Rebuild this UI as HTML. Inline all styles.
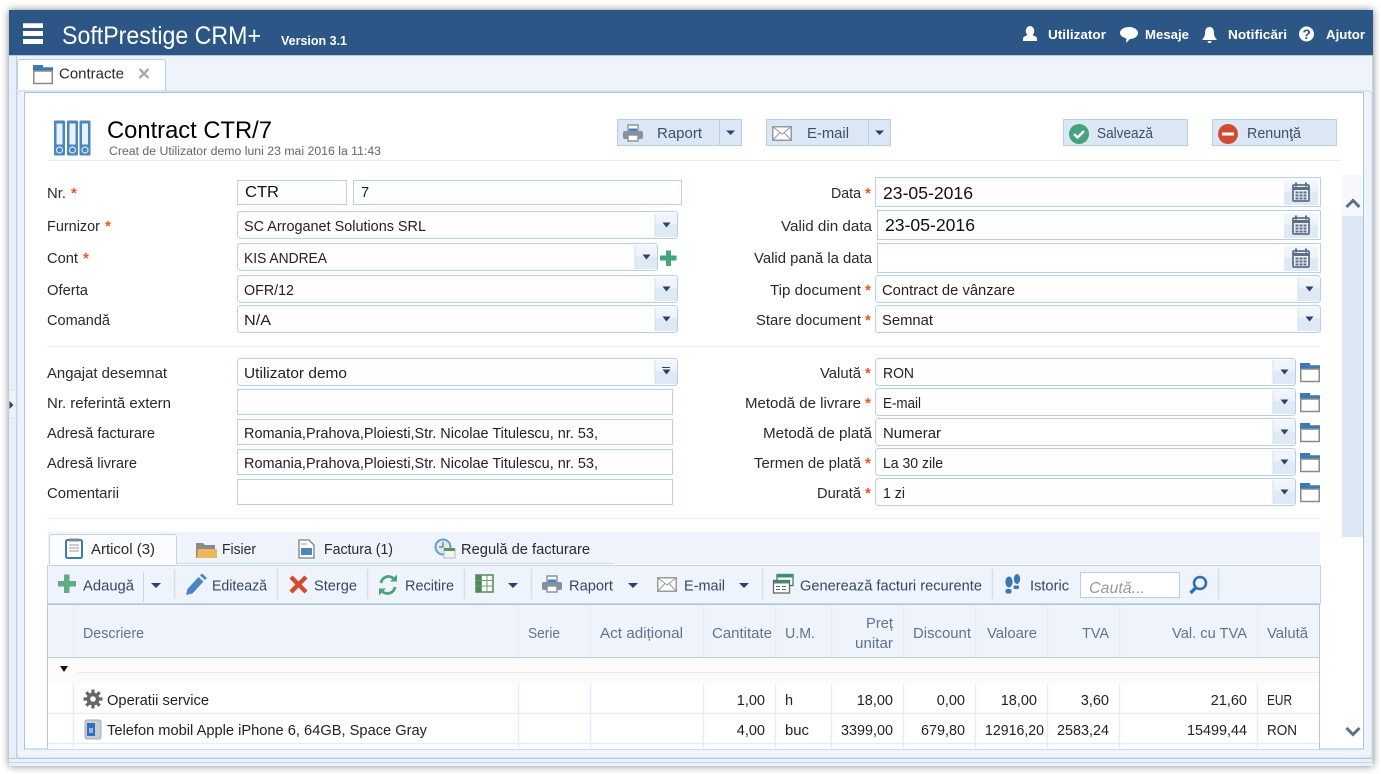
<!DOCTYPE html>
<html lang="ro">
<head>
<meta charset="utf-8">
<title>SoftPrestige CRM+</title>
<style>
html,body{margin:0;padding:0;background:#fff;width:1381px;height:774px;overflow:hidden}
svg{display:block;position:absolute;left:0;top:0}
text{font-family:"Liberation Sans",Arial,sans-serif;font-size:14.5px;fill:#222;white-space:pre}
.h{fill:#fff;font-weight:bold;font-size:13px}
.l{fill:#2a2a2a}
.s{fill:#f4511e;font-size:15px;font-weight:bold}
.b{fill:#3b4f6b}
.tb{fill:#33486a}
.th{fill:#5f7492}
</style>
</head>
<body>
<svg width="1381" height="774" viewBox="0 0 1381 774" xmlns="http://www.w3.org/2000/svg">
<defs>
<linearGradient id="sg" x1="0" y1="0" x2="0" y2="1"><stop offset="0" stop-color="#f3f7fc"/><stop offset=".45" stop-color="#edf2fa"/><stop offset=".5" stop-color="#dfe8f5"/><stop offset="1" stop-color="#dfe8f5"/></linearGradient>
<g id="dd"><rect width="22" height="24" fill="url(#sg)"/><path d="M0 0V24" stroke="#d3dfec"/><path d="M7.500 9.500h8l-4 5z" fill="#26446e"/></g>
<g id="fo"><path d="M0 0h10v2.300h10v4.200H0z" fill="#3f79b5"/><rect x=".75" y="6" width="18.5" height="12.5" fill="#fff" stroke="#8a8a8a" stroke-width="1.5"/></g>
<g id="cal"><rect width="34" height="25" fill="url(#sg)"/><rect x="9" y="5" width="16" height="16" rx="1" fill="#eef2f8" stroke="#5a6f88" stroke-width="1.8"/><path d="M9 7h16v3H9z" fill="#5a6f88"/><path d="M12 2.500v4M22 2.500v4" stroke="#5a6f88" stroke-width="2"/><path d="M11.500 11.500h3v2h-3zM15.500 11.500h3v2h-3zM19.500 11.500h3v2h-3zM11.500 14.500h3v2h-3zM15.500 14.500h3v2h-3zM19.500 14.500h3v2h-3zM11.500 17.500h3v2h-3zM15.500 17.500h3v2h-3zM19.500 17.500h3v2h-3z" fill="#5a6f88"/></g>
<g id="mail"><rect x=".75" y=".75" width="18.500" height="13.500" fill="#fff" stroke="#9a9a9a" stroke-width="1.500"/><path d="M1 1l9 7 9-7M1 14l7-7.500M19 14l-7-7.500" fill="none" stroke="#9a9a9a"/></g>
<g id="pr"><rect x="5" y="0" width="10" height="6" fill="#fff" stroke="#87919b" stroke-width="1.400"/><path d="M6 3.500h8V6H6z" fill="#3f85c9"/><rect x="0" y="6" width="20" height="8" rx="2" fill="#87919b"/><rect x="5" y="10" width="10" height="6" fill="#fff" stroke="#87919b" stroke-width="1.400"/></g>
<g id="tri"><path d="M0 0h10l-5 5z" fill="#26446e"/></g>
<g id="binder"><rect width="11" height="35" rx="1.500" fill="#4a86bf"/><rect x="2.500" y="3" width="6" height="21" fill="#eaf1f8"/><circle cx="5.500" cy="29.500" r="3" fill="#4a86bf" stroke="#dbe8f4" stroke-width="1.200"/></g>
</defs>

<!-- window -->
<rect x="9" y="10" width="1364" height="756" fill="#e9f0f9" style="filter:drop-shadow(0 0 4px rgba(0,0,0,.5))"/>
<rect x="9" y="10" width="1364" height="45" fill="#2b5686"/>
<rect x="9" y="55" width="1364" height="1.500" fill="#b4c9e1"/>
<rect x="17" y="56" width="1355" height="35" fill="#eff3fb"/>
<rect x="9" y="56" width="7" height="704" fill="#e7eff9"/>
<rect x="16" y="56" width="1" height="702" fill="#bed1e6"/>
<rect x="17" y="91" width="1355" height="667" rx="4" fill="#eff3fb" stroke="#c3d4e8"/>
<rect x="24.500" y="92.500" width="1339" height="656.500" fill="#fff" stroke="#a9c3de"/>
<rect x="9" y="758" width="1364" height="1" fill="#b4c9e1"/>
<rect x="9" y="762" width="1364" height="1" fill="#c4d5e8"/>
<rect x="1372" y="56" width="1" height="706" fill="#c3d4e8"/>
<rect x="9" y="390" width="7" height="28" fill="#eef3fa" stroke="#cdd9e8" stroke-width=".5"/>
<path d="M9.500 401l4 4-4 4z" fill="#26446e"/>

<!-- header -->
<path d="M23 23.300h20V28H23zM23 31h20v5H23zM23 39h20v5H23z" fill="#fff"/>
<text x="62" y="44" font-size="25" textLength="199" lengthAdjust="spacingAndGlyphs" style="fill:#fff;font-size:25px">SoftPrestige CRM+</text>
<text x="281" y="45" class="h" textLength="66" lengthAdjust="spacingAndGlyphs">Version 3.1</text>
<ellipse cx="1030" cy="31" rx="4.300" ry="5" fill="#fff"/><path d="M1023 41v-2.500c0-1.800 3-2.800 4.800-3.500 1.400.8 3 .8 4.400 0 1.800.7 4.800 1.700 4.800 3.500V41z" fill="#fff"/>
<text x="1048" y="39" class="h" textLength="58" lengthAdjust="spacingAndGlyphs">Utilizator</text>
<path d="M1129 27c5 0 9 2.500 9 6s-4 6-8 6l-4 4 .5-4.500c-3-1-6.500-2.500-6.500-5.500 0-3.500 4-6 9-6z" fill="#fff"/>
<text x="1145" y="39" class="h" textLength="44" lengthAdjust="spacingAndGlyphs">Mesaje</text>
<path d="M1209.500 27c3.500 0 4.500 3 4.500 6 0 3 1 4.500 2.500 6v1h-14v-1c1.500-1.500 2.500-3 2.500-6 0-3 1-6 4.500-6zM1207.500 41h4a2 2 0 0 1-4 0z" fill="#fff"/>
<text x="1228" y="39" class="h" textLength="59" lengthAdjust="spacingAndGlyphs">Notificări</text>
<circle cx="1306.500" cy="34" r="7.500" fill="#fff"/>
<text x="1302.500" y="38.800" style="fill:#2b5686;font-size:13.500px;font-weight:bold">?</text>
<text x="1326" y="39" class="h" textLength="39" lengthAdjust="spacingAndGlyphs">Ajutor</text>

<!-- main tab -->
<path d="M17.500 90V62a2.500 2.500 0 0 1 2.500-2.500h143a2.500 2.500 0 0 1 2.500 2.500V90" fill="#fff" stroke="#b9cde3"/>
<use href="#fo" x="33" y="65"/>
<text x="59" y="78.500" class="l" textLength="65" lengthAdjust="spacingAndGlyphs">Contracte</text>
<path d="M139.500 69l9 9M148.500 69l-9 9" stroke="#a8a8a8" stroke-width="2.400" fill="none"/>

<!-- title -->
<use href="#binder" x="54" y="120.500"/><use href="#binder" x="67" y="120.500"/><use href="#binder" x="79.500" y="120.500"/>
<text x="107" y="138" textLength="165" lengthAdjust="spacingAndGlyphs" style="font-size:24px;fill:#000">Contract CTR/7</text>
<text x="109" y="155" textLength="272" lengthAdjust="spacingAndGlyphs" style="font-size:11.500px;fill:#666">Creat de Utilizator demo luni 23 mai 2016 la 11:43</text>

<!-- buttons -->
<g fill="#dce7f5" stroke="#bccde1">
<rect x="617.500" y="119.500" width="124" height="26"/>
<rect x="766.500" y="119.500" width="124" height="26"/>
<rect x="1063.500" y="119.500" width="124" height="26"/>
<rect x="1212.500" y="119.500" width="124" height="26"/>
</g>
<path d="M719.500 120v25M868.500 120v25" stroke="#bccde1"/>
<use href="#pr" x="623" y="125"/>
<text x="657" y="138" class="b" textLength="45" lengthAdjust="spacingAndGlyphs">Raport</text>
<use href="#tri" x="726" y="131" transform="translate(72.700 12.600) scale(.9)"/>
<use href="#mail" x="772" y="126"/>
<text x="807" y="138" class="b" textLength="42" lengthAdjust="spacingAndGlyphs">E-mail</text>
<use href="#tri" x="875" y="131" transform="translate(87.600 12.600) scale(.9)"/>
<circle cx="1079" cy="134" r="10" fill="#46a37c"/>
<path d="M1074 134l3.500 3.500 6.500-6.500" fill="none" stroke="#fff" stroke-width="2.400"/>
<text x="1097" y="138" class="b" textLength="56" lengthAdjust="spacingAndGlyphs">Salvează</text>
<circle cx="1228" cy="134" r="10" fill="#d24b30"/>
<rect x="1222" y="132.500" width="12" height="3" fill="#fff"/>
<text x="1247" y="138" class="b" textLength="54" lengthAdjust="spacingAndGlyphs">Renunţă</text>
<rect x="48" y="160" width="1292" height="1" fill="#ececf0"/>

<!-- scrollbar -->
<rect x="1342" y="175" width="21" height="41" fill="#f6f8fc"/>
<rect x="1342" y="216" width="21" height="321" fill="#dce6f4"/>
<path d="M1346.500 207l6.500-6.500 6.500 6.500" fill="none" stroke="#5b6f87" stroke-width="3"/>
<path d="M1346.500 728l6.500 6.500 6.500-6.500" fill="none" stroke="#5b6f87" stroke-width="3"/>

<!-- form left labels -->
<g class="labels">
<text x="47" y="198" class="l" textLength="19" lengthAdjust="spacingAndGlyphs">Nr.</text><text x="71" y="198" class="s">*</text>
<text x="47" y="231" class="l" textLength="53" lengthAdjust="spacingAndGlyphs">Furnizor</text><text x="105" y="231" class="s">*</text>
<text x="47" y="263" class="l" textLength="31" lengthAdjust="spacingAndGlyphs">Cont</text><text x="83" y="263" class="s">*</text>
<text x="47" y="295" class="l" textLength="41" lengthAdjust="spacingAndGlyphs">Oferta</text>
<text x="47" y="325" class="l" textLength="63" lengthAdjust="spacingAndGlyphs">Comandă</text>
<text x="47" y="378" class="l" textLength="120" lengthAdjust="spacingAndGlyphs">Angajat desemnat</text>
<text x="47" y="408" class="l" textLength="124" lengthAdjust="spacingAndGlyphs">Nr. referintă extern</text>
<text x="47" y="438" class="l" textLength="108" lengthAdjust="spacingAndGlyphs">Adresă facturare</text>
<text x="47" y="468" class="l" textLength="90" lengthAdjust="spacingAndGlyphs">Adresă livrare</text>
<text x="47" y="498" class="l" textLength="72" lengthAdjust="spacingAndGlyphs">Comentarii</text>
<!-- right labels -->
<text x="831" y="198" class="l" textLength="30" lengthAdjust="spacingAndGlyphs">Data</text><text x="865" y="198" class="s">*</text>
<text x="781" y="231" class="l" textLength="91" lengthAdjust="spacingAndGlyphs">Valid din data</text>
<text x="754" y="263" class="l" textLength="118" lengthAdjust="spacingAndGlyphs">Valid pană la data</text>
<text x="770" y="295" class="l" textLength="91" lengthAdjust="spacingAndGlyphs">Tip document</text><text x="865" y="295" class="s">*</text>
<text x="756" y="325" class="l" textLength="105" lengthAdjust="spacingAndGlyphs">Stare document</text><text x="865" y="325" class="s">*</text>
<text x="820" y="378" class="l" textLength="41" lengthAdjust="spacingAndGlyphs">Valută</text><text x="865" y="378" class="s">*</text>
<text x="745" y="408" class="l" textLength="116" lengthAdjust="spacingAndGlyphs">Metodă de livrare</text><text x="865" y="408" class="s">*</text>
<text x="763" y="438" class="l" textLength="109" lengthAdjust="spacingAndGlyphs">Metodă de plată</text>
<text x="754" y="468" class="l" textLength="107" lengthAdjust="spacingAndGlyphs">Termen de plată</text><text x="865" y="468" class="s">*</text>
<text x="817" y="498" class="l" textLength="44" lengthAdjust="spacingAndGlyphs">Durată</text><text x="865" y="498" class="s">*</text>
</g>

<!-- inputs left -->
<g fill="#fff" stroke="#b8d0e6">
<rect x="237.500" y="180.500" width="109" height="24"/>
<rect x="353.500" y="180.500" width="328" height="24"/>
<rect x="237.500" y="211.500" width="440" height="27" rx="3"/>
<rect x="237.500" y="243.500" width="420" height="27" rx="3"/>
<rect x="237.500" y="275.500" width="440" height="27" rx="3"/>
<rect x="237.500" y="305.500" width="440" height="27" rx="3"/>
<rect x="237.500" y="358.500" width="440" height="27" rx="3"/>
<rect x="237.500" y="389.500" width="435" height="25"/>
<rect x="237.500" y="419.500" width="435" height="25"/>
<rect x="237.500" y="449.500" width="435" height="25"/>
<rect x="237.500" y="479.500" width="435" height="25"/>
<!-- inputs right -->
<rect x="875.500" y="177.500" width="445" height="29"/>
<rect x="877.500" y="210.500" width="443" height="29"/>
<rect x="877.500" y="243.500" width="443" height="29"/>
<rect x="875.500" y="275.500" width="445" height="27" rx="3"/>
<rect x="875.500" y="305.500" width="445" height="27" rx="3"/>
<rect x="875.500" y="358.500" width="420" height="27" rx="3"/>
<rect x="875.500" y="388.500" width="420" height="27" rx="3"/>
<rect x="875.500" y="418.500" width="420" height="27" rx="3"/>
<rect x="875.500" y="448.500" width="420" height="27" rx="3"/>
<rect x="875.500" y="478.500" width="420" height="27" rx="3"/>
</g>
<use href="#dd" x="655" y="213"/><use href="#dd" x="635" y="245"/><use href="#dd" x="655" y="277"/><use href="#dd" x="655" y="307"/><use href="#dd" x="655" y="360"/>
<rect x="662" y="367" width="8" height="1" fill="#26446e"/>
<use href="#dd" x="1298" y="277"/><use href="#dd" x="1298" y="307"/>
<use href="#dd" x="1273" y="360"/><use href="#dd" x="1273" y="390"/><use href="#dd" x="1273" y="420"/><use href="#dd" x="1273" y="450"/><use href="#dd" x="1273" y="480"/>
<use href="#cal" x="1284" y="180"/><use href="#cal" x="1284" y="213"/><use href="#cal" x="1284" y="246"/>
<use href="#fo" x="1300" y="363"/><use href="#fo" x="1300" y="393"/><use href="#fo" x="1300" y="423"/><use href="#fo" x="1300" y="453"/><use href="#fo" x="1300" y="483"/>
<path d="M666 250.500h5v5h5.500v5H671v5.500h-5v-5.500h-6v-5h6z" fill="#46a37c"/>

<!-- values -->
<text x="245" y="197" textLength="34" lengthAdjust="spacingAndGlyphs" style="font-size:16px;fill:#111">CTR</text>
<text x="361" y="197" style="font-size:14.500px">7</text>
<text x="244" y="231" textLength="182" lengthAdjust="spacingAndGlyphs">SC Arroganet Solutions SRL</text>
<text x="244" y="263" textLength="83" lengthAdjust="spacingAndGlyphs">KIS ANDREA</text>
<text x="244" y="295" textLength="50" lengthAdjust="spacingAndGlyphs">OFR/12</text>
<text x="244" y="325" textLength="27" lengthAdjust="spacingAndGlyphs">N/A</text>
<text x="244" y="378" textLength="103" lengthAdjust="spacingAndGlyphs">Utilizator demo</text>
<text x="244" y="438" textLength="354" lengthAdjust="spacingAndGlyphs">Romania,Prahova,Ploiesti,Str. Nicolae Titulescu, nr. 53,</text>
<text x="244" y="468" textLength="354" lengthAdjust="spacingAndGlyphs">Romania,Prahova,Ploiesti,Str. Nicolae Titulescu, nr. 53,</text>
<text x="883" y="199" textLength="90" lengthAdjust="spacingAndGlyphs" style="font-size:17.500px;fill:#111">23-05-2016</text>
<text x="885" y="231" textLength="90" lengthAdjust="spacingAndGlyphs" style="font-size:17.500px;fill:#111">23-05-2016</text>
<text x="882" y="295" textLength="133" lengthAdjust="spacingAndGlyphs">Contract de vânzare</text>
<text x="882" y="325" textLength="51" lengthAdjust="spacingAndGlyphs">Semnat</text>
<text x="883" y="378" textLength="31" lengthAdjust="spacingAndGlyphs">RON</text>
<text x="883" y="408" textLength="38" lengthAdjust="spacingAndGlyphs">E-mail</text>
<text x="883" y="438" textLength="58" lengthAdjust="spacingAndGlyphs">Numerar</text>
<text x="883" y="468" textLength="60" lengthAdjust="spacingAndGlyphs">La 30 zile</text>
<text x="883" y="498" textLength="22" lengthAdjust="spacingAndGlyphs">1 zi</text>
<rect x="47" y="346" width="1273" height="1" fill="#ececf0"/>
<rect x="47" y="518" width="1273" height="1" fill="#ececf0"/>

<!-- tabs -->
<rect x="48" y="532" width="1272" height="32" fill="#eff3fb"/>
<path d="M49.500 564V537a2.500 2.500 0 0 1 2.500-2.500h122a2.500 2.500 0 0 1 2.500 2.500V564" fill="#fbfcfe" stroke="#c3d4e8"/>
<path d="M177 563.500H614" stroke="#cddbeb"/>
<rect x="66" y="540" width="16" height="18" rx="1.500" fill="#fff" stroke="#3f79b5" stroke-width="2"/>
<path d="M69 538.500h10v3H69z" fill="#8a8a8a"/><path d="M69 545h10M69 548h10M69 551h10" stroke="#999"/>
<text x="91" y="554" class="l" textLength="64" lengthAdjust="spacingAndGlyphs">Articol (3)</text>
<path d="M196 558v-15h7l2 2h10v13z" fill="#8a8a8a"/><path d="M197 558l1-9h19v9z" fill="#eeb65f"/>
<text x="222" y="554" class="l" textLength="34" lengthAdjust="spacingAndGlyphs">Fisier</text>
<path d="M299 540h10l5 5v13h-15z" fill="#fff" stroke="#7f7f7f" stroke-width="1.300"/><rect x="301" y="548" width="11" height="7" fill="#4f85bf"/><path d="M301 544h6" stroke="#999"/>
<text x="324" y="554" class="l" textLength="69" lengthAdjust="spacingAndGlyphs">Factura (1)</text>
<circle cx="443" cy="547" r="7.500" fill="#dfeaf6" stroke="#63a0d4" stroke-width="2"/><rect x="444" y="549" width="11" height="9" fill="#f3f3f3" stroke="#aaa" stroke-width=".8"/><rect x="444" y="548" width="11" height="3" fill="#4ea04f"/><path d="M443 542v5h-4" stroke="#555" fill="none"/>
<text x="461" y="554" class="l" textLength="129" lengthAdjust="spacingAndGlyphs">Regulă de facturare</text>

<!-- toolbar -->
<rect x="47.500" y="565.500" width="1273" height="38" fill="#eff3fb" stroke="#c3d4e8"/>
<path d="M58 587v-5.500h6V575h5.500v6.500H76V587h-6.500v6.500H64V587z" fill="#5fae86" transform="translate(0 -.5)"/>
<text x="83" y="590.500" class="tb" textLength="51" lengthAdjust="spacingAndGlyphs">Adaugă</text>
<path d="M143.500 572v30" stroke="#c9d5e3"/>
<use href="#tri" x="151" y="583"/>
<g stroke="#d5e0ec" stroke-width="1.500"><path d="M174.500 569v30M277.500 569v30M367.500 569v30M464.500 569v30M531.500 569v30M762.500 569v30M992.500 569v30M1218.500 569v30"/></g>
<path d="M186 595l1.500-6 11-12 5 4.500-11 12z" fill="#4a86c4"/><path d="M200 575.500l2-2 5 4.500-2 2z" fill="#4a86c4"/>
<text x="212" y="590.500" class="tb" textLength="55" lengthAdjust="spacingAndGlyphs">Editează</text>
<path d="M291 577l15 15M306 577l-15 15" stroke="#d24b30" stroke-width="4.400" fill="none"/>
<text x="314" y="590.500" class="tb" textLength="43" lengthAdjust="spacingAndGlyphs">Sterge</text>
<path d="M381 583a7.500 7.500 0 0 1 13-4" fill="none" stroke="#46a37c" stroke-width="2.800"/><path d="M390 581.500h7v-7z" fill="#46a37c"/>
<path d="M395 587a7.500 7.500 0 0 1-13 4" fill="none" stroke="#46a37c" stroke-width="2.800"/><path d="M386 588.500h-7v7z" fill="#46a37c"/>
<text x="405" y="590.500" class="tb" textLength="49" lengthAdjust="spacingAndGlyphs">Recitire</text>
<rect x="476" y="575" width="17" height="17" fill="#fff" stroke="#4d8a55" stroke-width="1.500"/><path d="M476 575h5.500v17H476z" fill="#4d8a55"/><path d="M476 580.500h17M476 586h17M487 575v17M481.500 575v17" stroke="#6d9c73" stroke-width="1"/>
<use href="#tri" x="508" y="583"/>
<use href="#pr" x="542" y="576"/>
<text x="569" y="590.500" class="tb" textLength="44" lengthAdjust="spacingAndGlyphs">Raport</text>
<use href="#tri" x="628" y="583"/>
<use href="#mail" x="657" y="577"/>
<text x="684" y="590.500" class="tb" textLength="41" lengthAdjust="spacingAndGlyphs">E-mail</text>
<use href="#tri" x="739" y="583"/>
<rect x="777" y="574.500" width="16" height="11" fill="#fff" stroke="#3f8f6e" stroke-width="1.400"/><path d="M777 574.500h16v3h-16z" fill="#3f8f6e"/>
<rect x="773.500" y="580.500" width="16" height="12.500" fill="#fff" stroke="#666" stroke-width="1.300"/><path d="M774 580.500h15.500v3H774z" fill="#3f8f6e"/><path d="M776 586.500h4M782 586.500h4M776 589.500h4M782 589.500h4" stroke="#666"/>
<text x="800" y="590.500" class="tb" textLength="182" lengthAdjust="spacingAndGlyphs">Generează facturi recurente</text>
<g fill="#3a78b5"><ellipse cx="1009" cy="582" rx="3.600" ry="5.500"/><rect x="1005.500" y="589" width="6" height="4.500" rx="1.800"/><ellipse cx="1017" cy="579" rx="3.200" ry="5"/><rect x="1013.500" y="585.500" width="5.500" height="3.500" rx="1.500"/></g>
<text x="1030" y="590.500" class="tb" textLength="39" lengthAdjust="spacingAndGlyphs">Istoric</text>
<rect x="1080.500" y="572.500" width="99" height="25" fill="#fff" stroke="#b8d0e6"/>
<text x="1089" y="593" textLength="56" lengthAdjust="spacingAndGlyphs" style="font-style:italic;fill:#9a9a9a;font-size:15.500px">Caută...</text>
<circle cx="1200" cy="583" r="6" fill="none" stroke="#2f6fb3" stroke-width="2.600"/><path d="M1195.500 588l-5 5" stroke="#2f6fb3" stroke-width="3.400"/>

<!-- grid -->
<rect x="47.500" y="604" width="1272" height="145" fill="#fff"/>
<rect x="48" y="604" width="1271" height="53" fill="#eff3fb"/>
<rect x="48" y="658" width="1271" height="26" fill="#fbfbfc"/>
<path d="M47.500 604V749M1319.500 604V749" stroke="#b3c7dd"/>
<rect x="47" y="604" width="1273" height="1" fill="#b3c7dd"/>
<rect x="48" y="657" width="1271" height="1" fill="#b9cde3"/>
<rect x="78" y="672" width="1241" height="1" fill="#e8e8ec"/>
<path d="M60 666h8l-4 6z" fill="#111"/>
<rect x="48" y="684" width="25" height="65" fill="#fff"/>
<g stroke="#e8edf5" stroke-width="1.500" fill="none">
<path d="M73.500 605V657M518.500 605V657M590.500 605V657M703.500 605V657M775.500 605V657M831.500 605V657M903.500 605V657M975.500 605V657M1047.500 605V657M1119.500 605V657M1257.500 605V657"/>
<path d="M73.500 684V749M518.500 684V749M590.500 684V749M703.500 684V749M775.500 684V749M831.500 684V749M903.500 684V749M975.500 684V749M1047.500 684V749M1119.500 684V749M1257.500 684V749"/>
<path d="M48 713.500H1319M48 743.500H1319"/>
</g>
<text x="83" y="638" class="th" textLength="61" lengthAdjust="spacingAndGlyphs">Descriere</text>
<text x="528" y="638" class="th" textLength="32" lengthAdjust="spacingAndGlyphs">Serie</text>
<text x="600" y="638" class="th" textLength="83" lengthAdjust="spacingAndGlyphs">Act adițional</text>
<text x="712" y="638" class="th" textLength="60" lengthAdjust="spacingAndGlyphs">Cantitate</text>
<text x="785" y="638" class="th" textLength="30" lengthAdjust="spacingAndGlyphs">U.M.</text>
<text x="866" y="628" class="th" textLength="27" lengthAdjust="spacingAndGlyphs">Preț</text>
<text x="855" y="648" class="th" textLength="38" lengthAdjust="spacingAndGlyphs">unitar</text>
<text x="913" y="638" class="th" textLength="58" lengthAdjust="spacingAndGlyphs">Discount</text>
<text x="987" y="638" class="th" textLength="50" lengthAdjust="spacingAndGlyphs">Valoare</text>
<text x="1082" y="638" class="th" textLength="27" lengthAdjust="spacingAndGlyphs">TVA</text>
<text x="1172" y="638" class="th" textLength="75" lengthAdjust="spacingAndGlyphs">Val. cu TVA</text>
<text x="1267" y="638" class="th" textLength="41" lengthAdjust="spacingAndGlyphs">Valută</text>

<circle cx="93" cy="699" r="6.500" fill="#666"/>
<path d="M93 689.500v19M83.500 699h19M86.300 692.300l13.400 13.400M99.700 692.300l-13.400 13.400" stroke="#666" stroke-width="3.200"/>
<circle cx="93" cy="699" r="2.800" fill="#fff"/>
<text x="107" y="705" textLength="102" lengthAdjust="spacingAndGlyphs">Operatii service</text>
<rect x="85" y="720" width="16" height="19" rx="2" fill="#c9ccd0" stroke="#a6aaae"/>
<rect x="87" y="723" width="8" height="13" fill="#2f6fc0"/><path d="M89 728h4v5h-4z" fill="#fff" opacity=".5"/>
<text x="107" y="735" textLength="320" lengthAdjust="spacingAndGlyphs">Telefon mobil Apple iPhone 6, 64GB, Space Gray</text>

<g text-anchor="end">
<text x="765" y="705">1,00</text><text x="765" y="735">4,00</text>
<text x="893" y="705">18,00</text><text x="893" y="735" textLength="52" lengthAdjust="spacingAndGlyphs">3399,00</text>
<text x="965" y="705">0,00</text><text x="965" y="735" textLength="44" lengthAdjust="spacingAndGlyphs">679,80</text>
<text x="1037" y="705">18,00</text><text x="1044" y="735" textLength="59" lengthAdjust="spacingAndGlyphs">12916,20</text>
<text x="1109" y="705">3,60</text><text x="1109" y="735" textLength="52" lengthAdjust="spacingAndGlyphs">2583,24</text>
<text x="1247" y="705">21,60</text><text x="1247" y="735" textLength="60" lengthAdjust="spacingAndGlyphs">15499,44</text>
</g>
<text x="785" y="705">h</text><text x="785" y="735" textLength="24" lengthAdjust="spacingAndGlyphs">buc</text>
<text x="1267" y="705" textLength="25" lengthAdjust="spacingAndGlyphs">EUR</text><text x="1267" y="735" textLength="30" lengthAdjust="spacingAndGlyphs">RON</text>
</svg>
</body>
</html>
